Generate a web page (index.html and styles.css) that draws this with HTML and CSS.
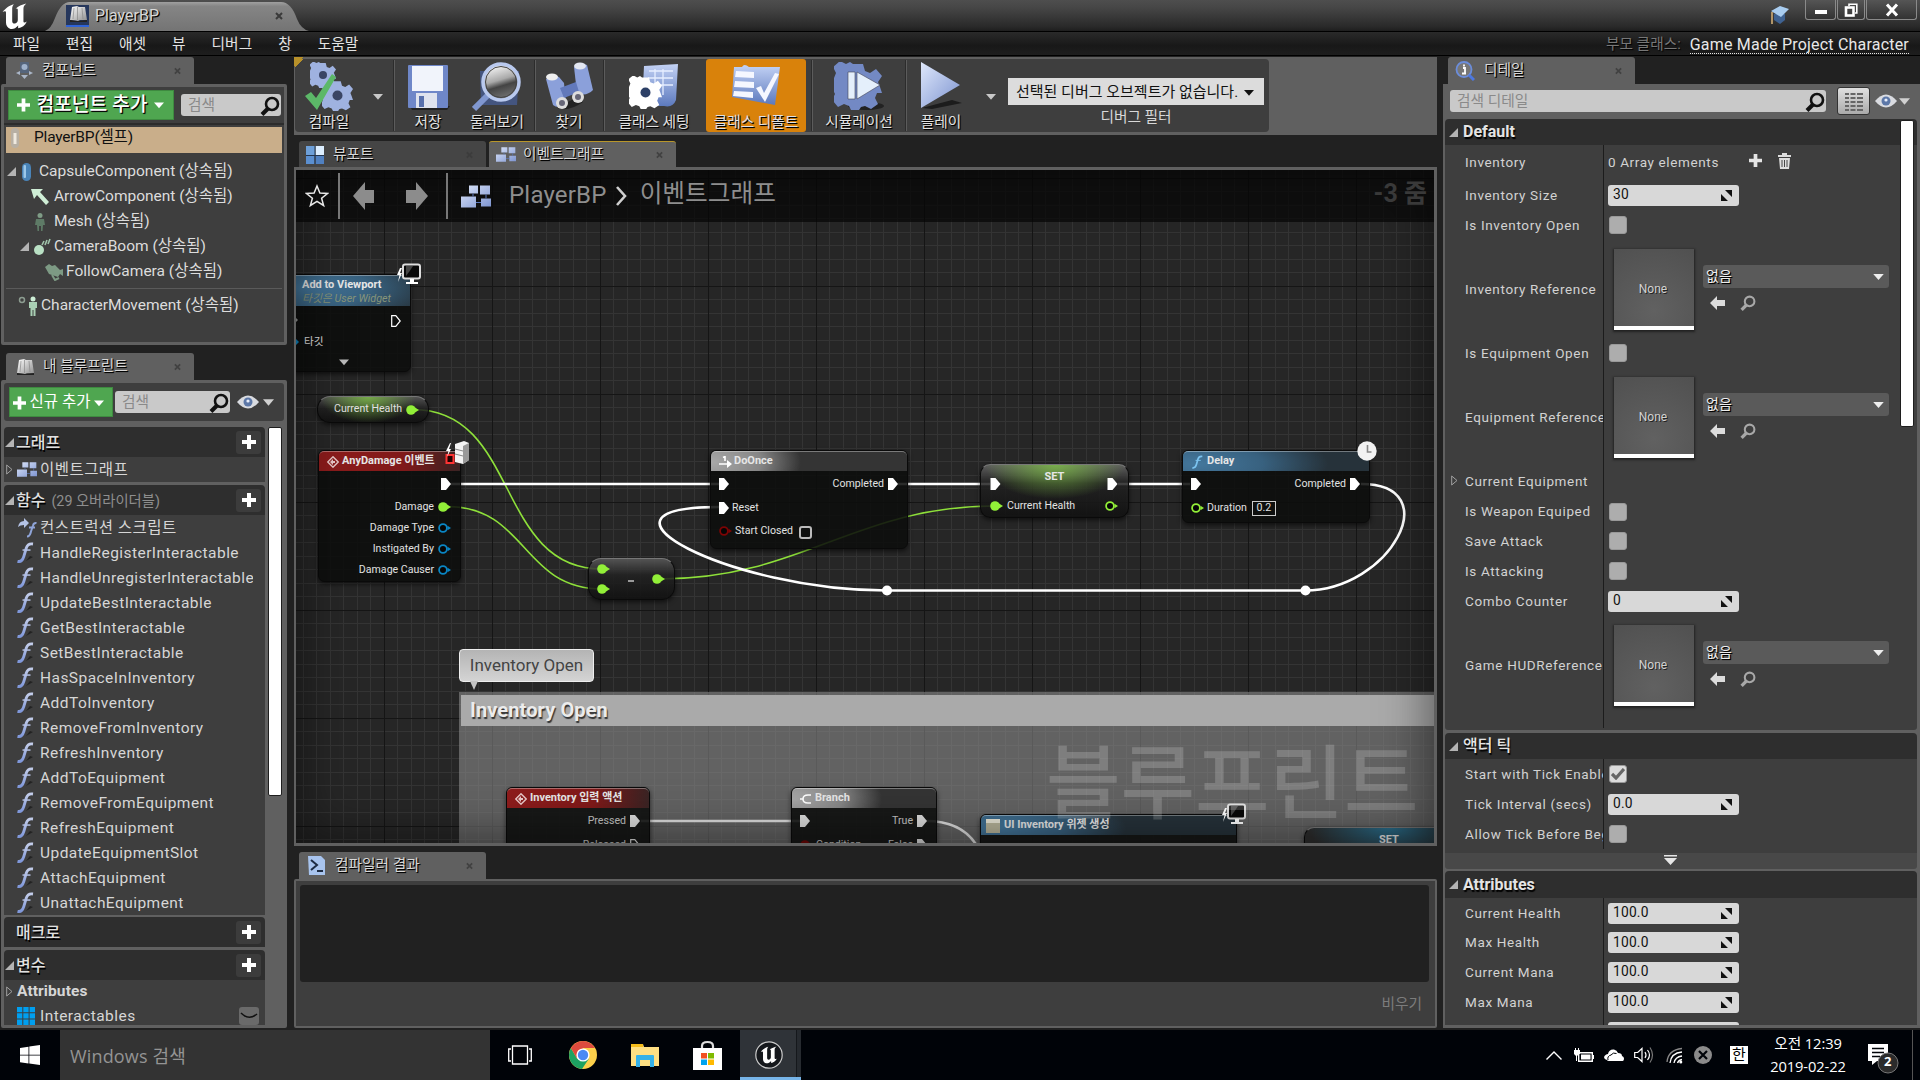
FILE: index.html
```html
<!DOCTYPE html>
<html lang="ko">
<head>
<meta charset="utf-8">
<title>PlayerBP</title>
<link rel="stylesheet" href="styles.css">
</head>
<body>
<svg class="defs" width="0" height="0">
  <defs>
    <linearGradient id="blue" x1="0" y1="0" x2="0" y2="1"><stop offset="0" stop-color="#c3d2f5"/><stop offset="1" stop-color="#5c79bd"/></linearGradient>
    <linearGradient id="blue2" x1="0" y1="0" x2="1" y2="1"><stop offset="0" stop-color="#dfe8fb"/><stop offset="1" stop-color="#7c93d0"/></linearGradient>
    <linearGradient id="fgrad" x1="0" y1="0" x2="0" y2="1"><stop offset="0" stop-color="#c3cdea"/><stop offset="1" stop-color="#7f97da"/></linearGradient>
    <linearGradient id="silver" x1="0" y1="0" x2="1" y2="1"><stop offset="0" stop-color="#ffffff"/><stop offset="1" stop-color="#8f8f8f"/></linearGradient>
    <linearGradient id="lens" x1=".3" y1="0" x2=".6" y2="1"><stop offset="0" stop-color="#fff"/><stop offset=".45" stop-color="#a9a9a9"/><stop offset=".62" stop-color="#444"/><stop offset="1" stop-color="#777"/></linearGradient>
    <linearGradient id="tabfill" x1="0" y1="0" x2="0" y2="1"><stop offset="0" stop-color="#a0a0a0"/><stop offset=".15" stop-color="#858585"/><stop offset="1" stop-color="#747474"/></linearGradient>
    <pattern id="minor" x="384" y="286" width="27" height="27" patternUnits="userSpaceOnUse"><path d="M0 0h27v1H0zM0 13h27v1H0zM0 0h1v27H0zM13 0h1v27h-1z" fill="#343434"/></pattern>
    <pattern id="major" x="384" y="286" width="108" height="108" patternUnits="userSpaceOnUse"><path d="M0 0h108v1H0zM0 0h1v108H0z" fill="#151515"/></pattern>
    <symbol id="i-ue" viewBox="0 0 24 24"><path d="M1 8C3 5 7 2 11 1C10 2 9.500 3.500 9.500 5V16C9.500 18 11 18.500 12 18.200C13.500 17.500 14.500 16.500 14.500 15V6C14.500 5 13.500 4.500 12.500 5C15 3 18 1.500 22 .5C20.500 2 19.500 3 19.500 5V16C19.500 17.500 20.500 18 22.500 16.500C21 20 18 22 14.800 22.500V20C12.500 22.500 10.500 23.500 8 23C5.500 22 4 20 4 17.500V8.500C4 7 2.500 7 1 8Z" fill="#fff"/></symbol>
    <symbol id="i-x" viewBox="0 0 8 8"><path d="M1 1l6 6M7 1l-6 6" stroke="#3a3a3a" stroke-width="2"/></symbol>
    <symbol id="i-book" viewBox="0 0 20 18"><path d="M4 2l5-1 2 1 6 0 2 13-7 0-2 1-8-1z" fill="url(#silver)"/><path d="M2 15l8 1 9-1v2H2z" fill="#222"/><path d="M9.500 2v13M6 3L5 14M14 3l1 11" stroke="#888" stroke-width=".7"/></symbol>
    <symbol id="i-mag" viewBox="0 0 20 20"><circle cx="12" cy="8" r="6" fill="none" stroke="currentColor" stroke-width="2.600"/><path d="M8 12.500L2 18.500" stroke="currentColor" stroke-width="4"/></symbol>
    <symbol id="i-down" viewBox="0 0 12 8"><path d="M0 1h12L6 8z" fill="currentColor"/></symbol>
    <symbol id="i-plus" viewBox="0 0 14 14"><path d="M5 0h4v5h5v4H9v5H5V9H0V5h5z" fill="currentColor"/></symbol>
    <symbol id="i-open" viewBox="0 0 9 9"><path d="M9 0v9H0z" fill="#b4b4b4"/></symbol>
    <symbol id="i-shut" viewBox="0 0 7 11"><path d="M.7 1v9L6 5.500z" fill="none" stroke="#a0a0a0"/></symbol>
    <symbol id="i-eye" viewBox="0 0 22 14"><path d="M0 7Q11-6 22 7Q11 20 0 7z" fill="#d9dbe0"/><circle cx="11" cy="7" r="4.500" fill="#5d78a8"/><circle cx="11" cy="6" r="1.600" fill="#e8eefc"/></symbol>
    <symbol id="i-graph" viewBox="0 0 30 24"><path d="M8 1h9v8H8zM19 1h10v9H19zM0 12h15v11H0zM20 14h10v8H20z" fill="url(#blue2)"/><path d="M12 9v3M25 10v4M15 18h5" stroke="#5c79bd"/></symbol>
    <symbol id="i-view" viewBox="0 0 18 18"><path d="M0 0h9v9H0z" fill="#6d9fd8"/><path d="M9.500 0H18v9H9.500z" fill="#dceeff"/><path d="M0 10h8.500v8H0z" fill="#5b8fd0"/><path d="M9.500 10H18v8H9.500z" fill="#5080c0"/><path d="M9 0v18M0 9.500h18" stroke="#23344d"/></symbol>
    <symbol id="i-f" viewBox="0 0 17 21"><path d="M.5 19.300Q5 20.500 6.800 14.500L9.300 6Q10.800 1.200 16 2" fill="none" stroke="currentColor" stroke-width="2.600"/><path d="M5.500 8h8" stroke="currentColor" stroke-width="1.500"/></symbol>
    <symbol id="i-fl" viewBox="0 0 17 21"><path d="M9 19l7-4-3-1z" fill="#222"/><path d="M.5 19.300Q5 20.500 6.800 14.500L9.300 6Q10.800 1.200 16 2" fill="none" stroke="url(#fgrad)" stroke-width="2.800"/><path d="M5.500 7.300h8v1.500h-8z" fill="#b4c0e4"/></symbol>
    <symbol id="i-spin" viewBox="0 0 11 11"><path d="M4 0h7v7zM0 4v7h7z" fill="#111"/></symbol>
    <symbol id="i-back" viewBox="0 0 15 14"><path d="M0 7l7-7v4h8v6H7v4z" fill="currentColor"/></symbol>
    <symbol id="p-exec" viewBox="0 0 10 12"><path d="M0 0h5l5 6-5 6H0z" fill="#fff"/></symbol>
    <symbol id="p-exec0" viewBox="0 0 10 12"><path d="M.7.7h4.100L9.200 6l-4.400 5.300H.7z" fill="none" stroke="#fff" stroke-width="1.200"/></symbol>
    <symbol id="p-full" viewBox="0 0 13 10"><circle cx="5" cy="5" r="4.800" fill="currentColor"/><path d="M9 2.500l4 2.500-4 2.500z" fill="currentColor"/></symbol>
    <symbol id="p-ring" viewBox="0 0 13 10"><circle cx="5" cy="5" r="3.900" fill="#050505" stroke="currentColor" stroke-width="1.800"/><path d="M9.500 2.800L13 5 9.500 7.200z" fill="currentColor"/></symbol>
    <symbol id="i-mon" viewBox="0 0 26 22"><path d="M4 5L1 12h2.500L2 19l4-9H4l2-5z" fill="#fff"/><rect x="7" y="1.500" width="17" height="14" rx="2" fill="#080808" stroke="#ddd" stroke-width="2"/><path d="M14 16h4v3h4v2H10v-2h4z" fill="#fff"/><path d="M10 13Q14 8 17 3h-7z" fill="#444"/></symbol>
    <symbol id="i-event" viewBox="0 0 12 12"><path d="M6 .8L11.200 6 6 11.200.8 6z" fill="none" stroke="#e9c9c9" stroke-width="1.400"/><path d="M3 6l3-3v2h2v2H6v2z" fill="#e9c9c9"/></symbol>
    <symbol id="i-gear" viewBox="-12 -12 24 24"><path d="M-2.500-11h5l1 3.500 2.500 1 3-2 3 3.500-2 3 1 2.500 1 3-2.500 0-1 2.500 1.500 3-3.500 2.500-3-1.500-2 .5-1 1.500h-4l-1-2-2.500-1-3 1.500-3-3.500 1.500-3-1-2-2.500-1v-4l3-1 1-2.500-1.500-3 3.500-3 3 1.500 2-1z" fill="currentColor"/></symbol>
  </defs>
</svg>

<div class="app">
  <header class="titlebar">
    <svg class="ue" width="30" height="27"><use href="#i-ue"/></svg>
    <div class="doctab">
      <svg class="doctab-shape" width="264" height="30" viewBox="0 0 264 30"><path d="M0 30Q6 28 10 17Q16 1 25 1H236Q246 1 252 18Q256 28 264 30z" fill="url(#tabfill)"/></svg>
      <div class="doctab-row">
        <span class="docicon"><svg width="20" height="18"><use href="#i-book"/></svg></span>
        <span class="sh">PlayerBP</span>
        <svg class="tx" width="8" height="8"><use href="#i-x"/></svg>
      </div>
    </div>
    <svg class="hat" width="20" height="20" viewBox="0 0 20 20"><path d="M4 9v6l6 4 5-4V9z" fill="#3f6291"/><path d="M1 6l9-5 9 3-8 8z" fill="#a9cdf0"/><path d="M2 7v12" stroke="#b09468" stroke-width="2"/></svg>
    <div class="winbtns">
      <span class="w1"><svg width="14" height="14" viewBox="0 0 14 14"><path d="M1 7h12v4H1z" fill="#fff"/></svg></span>
      <span class="w2"><svg width="14" height="14" viewBox="0 0 14 14"><path d="M5 3V1.200h7.800V10H11" fill="none" stroke="#fff" stroke-width="1.600"/><rect x="2" y="4.500" width="7.500" height="8" fill="none" stroke="#fff" stroke-width="2.600"/></svg></span>
      <span class="w3"><svg width="14" height="14" viewBox="0 0 14 14"><path d="M2 1.500l10 11M12 1.500l-10 11" stroke="#fff" stroke-width="3"/></svg></span>
    </div>
  </header>
  <nav class="menubar">
    <span>파일</span><span>편집</span><span>애셋</span><span>뷰</span><span>디버그</span><span>창</span><span>도움말</span>
    <div class="parent"><span class="pl">부모 클래스:</span><span class="link">Game Made Project Character</span></div>
  </nav>

  <main class="work">
    <aside class="left">
      <div class="tab">
        <svg width="19" height="20" viewBox="0 0 19 20"><rect x="5" y="1" width="9" height="11" rx="1" fill="#55657c"/><circle cx="9.500" cy="6" r="3" fill="#9fb2cc"/><path d="M1 12l4-2v4zM18 12l-4-2v4zM6 14h7l-3.500 4z" fill="#aab6c8"/></svg>
        <span class="sh">컴포넌트</span><svg class="tx" width="7" height="8"><use href="#i-x"/></svg>
      </div>
      <section class="panel comp">
        <div class="bar">
          <div class="green big"><svg width="13" height="14"><use href="#i-plus"/></svg><span class="sh">컴포넌트 추가</span><svg width="10" height="8"><use href="#i-down"/></svg></div>
          <div class="search s1"><span>검색</span><svg width="20" height="20"><use href="#i-mag"/></svg></div>
        </div>
        <div class="tree">
          <div class="row sel"><svg width="10" height="20" viewBox="0 0 10 20"><rect x="1" y="0" width="8" height="20" rx="4" fill="#b8b0a4"/><path d="M3.500 5h3v11h-3z" fill="#efe9df"/></svg><span>PlayerBP(셀프)</span></div>
          <div class="row d0"><svg width="9" height="9"><use href="#i-open"/></svg><svg class="cap" width="12" height="18" viewBox="0 0 12 18"><rect x="1" y="0" width="9" height="18" rx="4.500" fill="#4a84b8"/><rect x="2.500" y="2" width="2.500" height="13" rx="1" fill="#9cc8ea"/></svg><span>CapsuleComponent (상속됨)</span></div>
          <div class="row d1"><svg width="20" height="18" viewBox="0 0 20 18"><path d="M0 1h12L9 4l9 10-3 3L6 7l-3 4z" fill="#cfeed6"/></svg><span>ArrowComponent (상속됨)</span></div>
          <div class="row d1"><svg width="20" height="18" viewBox="0 0 20 18"><circle cx="9" cy="2.500" r="2.500" fill="#7f9c86"/><path d="M5 6h8l1 6h-2l-.5 6H10v-5H8v5H6.500L6 12H4z" fill="#5e7a66"/></svg><span>Mesh (상속됨)</span></div>
          <div class="row d2"><svg width="9" height="9"><use href="#i-open"/></svg><svg class="boom" width="19" height="18" viewBox="0 0 19 18"><circle cx="7" cy="12" r="5" fill="#b9e0c4"/><path d="M10 7l2-4M13 7l2-5M16 6l2-5" stroke="#9fc4aa" stroke-width="1.600"/></svg><span>CameraBoom (상속됨)</span></div>
          <div class="row d3"><svg width="20" height="18" viewBox="0 0 20 18"><path d="M1 4l4-3 3 2 3-1 5 5 3-1v7l-3-2-2 3-9-3z" fill="#7d9a84"/><path d="M8 12l3 5 4-2" fill="none" stroke="#7d9a84" stroke-width="2"/></svg><span>FollowCamera (상속됨)</span></div>
          <div class="row d4"><svg width="21" height="20" viewBox="0 0 21 20"><circle cx="4" cy="4" r="2.500" fill="none" stroke="#8c9c90" stroke-width="1.500"/><circle cx="15" cy="3" r="2.500" fill="#cdeed6"/><path d="M11 6h8v6h-1.500v8h-2v-6h-1v6h-2v-8H11z" fill="#a9d0b4"/></svg><span>CharacterMovement (상속됨)</span></div>
        </div>
      </section>

      <div class="tab t2"><svg width="20" height="18"><use href="#i-book"/></svg><span class="sh">내 블루프린트</span><svg class="tx" width="7" height="8"><use href="#i-x"/></svg></div>
      <section class="panel bp">
        <div class="bar">
          <div class="green"><svg width="13" height="14"><use href="#i-plus"/></svg><span>신규 추가</span><svg width="10" height="8"><use href="#i-down"/></svg></div>
          <div class="search s2"><span>검색</span><svg width="20" height="20"><use href="#i-mag"/></svg></div>
          <svg class="eye" width="22" height="14"><use href="#i-eye"/></svg><svg class="wt" width="11" height="8"><use href="#i-down"/></svg>
        </div>
        <div class="listwrap">
          <div class="list">
            <div class="hd"><svg width="9" height="9"><use href="#i-open"/></svg><b>그래프</b><i class="add"><svg width="14" height="14"><use href="#i-plus"/></svg></i></div>
            <div class="body gr"><div class="fn"><svg class="sh0" width="7" height="11"><use href="#i-shut"/></svg><svg width="20" height="17"><use href="#i-graph"/></svg><span>이벤트그래프</span></div></div>
            <div class="hd"><svg width="9" height="9"><use href="#i-open"/></svg><b>함수</b><em>(29 오버라이더블)</em><i class="add"><svg width="14" height="14"><use href="#i-plus"/></svg></i></div>
            <div class="body fns">
              <div class="fn"><svg class="fi" width="20" height="20" viewBox="0 0 20 20"><path d="M1 9Q2 3 7 3V0l5 5-5 5V7Q3 7 1 9z" fill="#b4c2e4"/><path d="M10 18.500q3 0 4-5l2-6q.8-3 3.500-2.500M12 9.500h6" fill="none" stroke="#8fa4d8" stroke-width="2"/></svg><span>컨스트럭션 스크립트</span></div>
              <div class="fn"><svg class="fi" width="17" height="21"><use href="#i-fl"/></svg><span>HandleRegisterInteractable</span></div>
              <div class="fn"><svg class="fi" width="17" height="21"><use href="#i-fl"/></svg><span>HandleUnregisterInteractable</span></div>
              <div class="fn"><svg class="fi" width="17" height="21"><use href="#i-fl"/></svg><span>UpdateBestInteractable</span></div>
              <div class="fn"><svg class="fi" width="17" height="21"><use href="#i-fl"/></svg><span>GetBestInteractable</span></div>
              <div class="fn"><svg class="fi" width="17" height="21"><use href="#i-fl"/></svg><span>SetBestInteractable</span></div>
              <div class="fn"><svg class="fi" width="17" height="21"><use href="#i-fl"/></svg><span>HasSpaceInInventory</span></div>
              <div class="fn"><svg class="fi" width="17" height="21"><use href="#i-fl"/></svg><span>AddToInventory</span></div>
              <div class="fn"><svg class="fi" width="17" height="21"><use href="#i-fl"/></svg><span>RemoveFromInventory</span></div>
              <div class="fn"><svg class="fi" width="17" height="21"><use href="#i-fl"/></svg><span>RefreshInventory</span></div>
              <div class="fn"><svg class="fi" width="17" height="21"><use href="#i-fl"/></svg><span>AddToEquipment</span></div>
              <div class="fn"><svg class="fi" width="17" height="21"><use href="#i-fl"/></svg><span>RemoveFromEquipment</span></div>
              <div class="fn"><svg class="fi" width="17" height="21"><use href="#i-fl"/></svg><span>RefreshEquipment</span></div>
              <div class="fn"><svg class="fi" width="17" height="21"><use href="#i-fl"/></svg><span>UpdateEquipmentSlot</span></div>
              <div class="fn"><svg class="fi" width="17" height="21"><use href="#i-fl"/></svg><span>AttachEquipment</span></div>
              <div class="fn"><svg class="fi" width="17" height="21"><use href="#i-fl"/></svg><span>UnattachEquipment</span></div>
            </div>
            <div class="hd m"><b class="ind">매크로</b><i class="add"><svg width="14" height="14"><use href="#i-plus"/></svg></i></div>
            <div class="hd"><svg width="9" height="9"><use href="#i-open"/></svg><b>변수</b><i class="add"><svg width="14" height="14"><use href="#i-plus"/></svg></i></div>
            <div class="body vars">
              <div class="fn at"><svg class="sh0" width="7" height="11"><use href="#i-shut"/></svg><b>Attributes</b></div>
              <div class="fn"><svg class="fi" width="18" height="18" viewBox="0 0 18 18"><path d="M0 0h5.300v5.300H0zM6.300 0h5.300v5.300H6.300zM12.600 0H18v5.300h-5.400zM0 6.300h5.300v5.300H0zM6.300 6.300h5.300v5.300H6.300zM12.600 6.300H18v5.300h-5.400zM0 12.600h5.300V18H0zM6.300 12.600h5.300V18H6.300zM12.600 12.600H18V18h-5.400z" fill="#009ff0"/></svg><span>Interactables</span><i class="lid"><svg width="18" height="8" viewBox="0 0 18 8"><path d="M1 1q8 8 16 1" fill="none" stroke="#111" stroke-width="1.600"/></svg></i></div>
            </div>
          </div>
          <div class="thumb"></div>
        </div>
      </section>
    </aside>

    <section class="center">
      <div class="toolbar">
        <div class="tools">
          <div class="tool tl-a"><svg width="48" height="50" viewBox="0 0 48 50"><g color="#9fb2e0"><svg x="5" y="0" width="26" height="26"><use href="#i-gear"/></svg><svg x="17" y="18" width="31" height="31"><use href="#i-gear"/></svg></g><circle cx="18" cy="13" r="4" fill="#3a4564"/><circle cx="32.500" cy="33.500" r="5" fill="#3a4564"/><path d="M0 34l6-4 5 6L27 12l4 3L12 48z" fill="#5cb868"/></svg><span class="sh">컴파일</span></div>
          <svg class="ta" width="10" height="7"><use href="#i-down"/></svg><i class="sep s-a"></i>
          <div class="tool tl-b"><svg width="48" height="50" viewBox="0 0 48 50"><path d="M6 44h40l-3 4H8z" fill="#222"/><rect x="4" y="3" width="40" height="43" rx="1" fill="#6f87c8"/><rect x="8" y="4" width="31" height="25" fill="#f1f4fb"/><rect x="12" y="31" width="21" height="15" fill="#dfe3ee"/><rect x="15" y="34" width="5" height="11" fill="#5870ac"/></svg><span class="sh">저장</span></div>
          <div class="tool tl-c"><svg width="50" height="50" viewBox="0 0 50 50"><path d="M8 9h39l-2 34H9z" fill="#44557f"/><path d="M2 47l14-14" stroke="#8097d0" stroke-width="6"/><circle cx="29" cy="20" r="18" fill="url(#lens)" stroke="#b9c9ee" stroke-width="3.500"/><circle cx="29" cy="20" r="15.500" fill="none" stroke="#444"/></svg><span class="sh">둘러보기</span></div>
          <i class="sep s-b"></i>
          <div class="tool tl-d"><svg width="48" height="50" viewBox="0 0 48 50"><path d="M12 46q12 4 26-6l-4-6z" fill="#222"/><path d="M1 17q6-5 13-2l5 6 2 20q-7 7-13 2z" fill="#8ba0da"/><path d="M29 5q6-5 13-2l6 25q-7 7-16 3z" fill="#8ba0da"/><path d="M15 26l16-6 3 10-15 6z" fill="#6279bb"/><ellipse cx="7" cy="15" rx="6" ry="3.500" fill="#efefef"/><ellipse cx="35" cy="4" rx="6" ry="3.500" fill="#e3e7f2"/><circle cx="17" cy="41" r="6" fill="#ddd"/><circle cx="33" cy="35" r="6" fill="#ddd"/><circle cx="17" cy="41" r="3" fill="#667"/><circle cx="33" cy="35" r="3" fill="#667"/></svg><span class="sh">찾기</span></div>
          <i class="sep s-c"></i>
          <div class="tool tl-e"><svg width="50" height="50" viewBox="0 0 50 50"><path d="M15 4l34-2-2 36q-3 8-12 6l-22 0z" fill="url(#blue)"/><path d="M20 9h24M19 16h25M19 23h25M26 7v26M34 7v26" stroke="#e6eeff" stroke-width="1.300"/><svg x="0" y="14" width="33" height="33" color="#fff"><use href="#i-gear"/></svg><circle cx="16.500" cy="30.500" r="5" fill="#2c3f66"/></svg><span class="sh">클래스 세팅</span></div>
          <div class="tool tl-f on"><svg width="50" height="50" viewBox="0 0 50 50"><path d="M3 5h8q2-4 7 0h31l-5 38L1 35z" fill="url(#blue)"/><path d="M5 9l18 1v6L4 15zM4 19l19 1v6L3 25zM3 29l19 1v6L2 34z" fill="#f5f7ff"/><path d="M25 26l5-2 3 7 11-20 4 1-14 28z" fill="#f5f7ff"/></svg><span class="sh">클래스 디폴트</span></div>
          <i class="sep s-d"></i>
          <div class="tool tl-g"><svg width="50" height="50" viewBox="0 0 50 50"><ellipse cx="32" cy="44" rx="18" ry="4" fill="#222"/><svg x="0" y="0" width="48" height="48" color="#7389c4"><use href="#i-gear"/></svg><path d="M14 10h7v27h-7zM23 10l23 13-23 14z" fill="#e4effb" stroke="#445" stroke-width=".6"/></svg><span class="sh">시뮬레이션</span></div>
          <i class="sep s-e"></i>
          <div class="tool tl-h"><svg width="42" height="50" viewBox="0 0 42 50"><path d="M2 46l30-8 10 3-30 6z" fill="#1c1c1c"/><path d="M1 0l39 23L1 46z" fill="url(#blue2)"/></svg><span class="sh">플레이</span></div>
          <svg class="ta tb" width="10" height="7"><use href="#i-down"/></svg>
          <div class="dbg"><div class="combo"><span>선택된 디버그 오브젝트가 없습니다.</span><svg width="10" height="7"><use href="#i-down"/></svg></div><span class="lbl">디버그 필터</span></div>
        </div>
      </div>
      <div class="tabs">
        <div class="tab off"><svg width="18" height="18"><use href="#i-view"/></svg><span class="sh">뷰포트</span><svg class="tx" width="7" height="8"><use href="#i-x"/></svg></div>
        <div class="tab act"><svg width="20" height="17"><use href="#i-graph"/></svg><span class="sh">이벤트그래프</span><svg class="tx" width="7" height="8"><use href="#i-x"/></svg></div>
      </div>
      <div class="graph">
        <div class="world">
          <svg class="layer" width="1434" height="843" viewBox="0 0 1434 843">
            <rect x="296" y="170" width="1138" height="673" fill="url(#minor)"/>
            <rect x="296" y="170" width="1138" height="673" fill="url(#major)"/>
            <rect x="459" y="692" width="975" height="151" fill="#9a9a9a" fill-opacity=".52"/>
            <rect x="461" y="695" width="973" height="31" fill="#aaa"/>
            <g fill="none" stroke="#8ee03a" stroke-width="1.600">
              <path d="M413 409.500C520 409.500 495 569 602 569"/>
              <path d="M447 506.500C527 506.500 522 589 602 589"/>
              <path d="M661 579C801 579 855 506 995 506"/>
            </g>
            <g fill="none" stroke="#fff" stroke-width="2.600">
              <path d="M451 484H719M898 484H990M1118 484H1190"/>
              <path d="M887 590.500C730 590.500 570 507 719 507"/>
              <path d="M887 590.500H1305"/>
              <path d="M1361 484C1448 484 1390 590.500 1305 590.500"/>
              <path d="M641 821H800" stroke="#ddd"/>
              <path d="M926 821Q962 821 977 846" stroke="#ddd"/>
            </g>
            <g fill="#fff"><circle cx="887" cy="590.500" r="5"/><circle cx="1305.500" cy="590.500" r="5"/></g>
          </svg>

          <div class="node n-view"><div class="nh blue two"><b>Add to Viewport</b><em>타깃은 User Widget</em></div>
            <div class="nb"><div class="pr ex0"><svg class="r" width="10" height="12"><use href="#p-exec0"/></svg></div><div class="pr tg">타깃</div><svg class="more" width="10" height="8"><use href="#i-down"/></svg></div></div>
          <svg class="badge b6" width="3" height="30" viewBox="0 0 3 30"><path d="M0 3l2 2-2 2z" fill="#999"/><path d="M0 24l3 3-3 3z" fill="#0a86c4"/></svg>
          <svg class="badge b1" width="26" height="22"><use href="#i-mon"/></svg>

          <div class="node pill n-ch"><span>Current Health</span><svg class="pg" width="13" height="10"><use href="#p-full"/></svg></div>

          <div class="node n-any"><div class="nh red"><svg width="12" height="12"><use href="#i-event"/></svg><b>AnyDamage 이벤트</b></div>
            <div class="nb"><div class="pr"><svg class="r" width="10" height="12"><use href="#p-exec"/></svg></div>
              <div class="pr p"><span class="r">Damage</span><svg class="pg" width="13" height="10"><use href="#p-full"/></svg></div>
              <div class="pr p"><span class="r">Damage Type</span><svg class="po" width="13" height="10"><use href="#p-ring"/></svg></div>
              <div class="pr p"><span class="r">Instigated By</span><svg class="po" width="13" height="10"><use href="#p-ring"/></svg></div>
              <div class="pr p"><span class="r">Damage Causer</span><svg class="po" width="13" height="10"><use href="#p-ring"/></svg></div></div></div>
          <svg class="badge b2" width="28" height="26" viewBox="0 0 28 26"><rect x="1.500" y="15" width="7" height="8" fill="#200" stroke="#f33" stroke-width="2"/><path d="M5 3L1 11h2.500L2 17l4-8H4l2-6z" fill="#fff"/><path d="M10 4l9-3 5 2v17l-6 4-8-2z" fill="#f4f4f4"/><path d="M18 6l6-3v17l-6 4z" fill="#999"/><path d="M10 9l8 2M10 14l8 2" stroke="#888"/></svg>

          <div class="node pill n-sub"><svg class="pg i1" width="13" height="10"><use href="#p-full"/></svg><svg class="pg i2" width="13" height="10"><use href="#p-full"/></svg><i class="minus"></i><svg class="pg i3" width="13" height="10"><use href="#p-full"/></svg></div>

          <div class="node n-once"><div class="nh gray"><svg width="13" height="12" viewBox="0 0 13 12"><path d="M0 8h9M4 1.500l2-1V5" fill="none" stroke="#fff" stroke-width="1.600"/><path d="M8 4l5 4-5 4z" fill="#fff"/></svg><b>DoOnce</b></div>
            <div class="nb"><div class="pr"><svg width="10" height="12"><use href="#p-exec"/></svg><span class="r">Completed</span><svg width="10" height="12"><use href="#p-exec"/></svg></div>
              <div class="pr q"><svg width="10" height="12"><use href="#p-exec"/></svg><span>Reset</span></div>
              <div class="pr q"><svg class="pk" width="13" height="10"><use href="#p-ring"/></svg><span>Start Closed</span><i class="cb"></i></div></div></div>

          <div class="node pill n-set"><b>SET</b><div class="pr"><svg width="11" height="12"><use href="#p-exec"/></svg><svg class="r" width="11" height="12"><use href="#p-exec"/></svg></div>
            <div class="pr s"><svg class="pg" width="13" height="10"><use href="#p-full"/></svg><span>Current Health</span><svg class="pg r" width="13" height="10"><use href="#p-ring"/></svg></div></div>

          <div class="node n-delay"><div class="nh blue"><svg class="fb" width="11" height="14"><use href="#i-f"/></svg><b>Delay</b></div>
            <div class="nb"><div class="pr"><svg width="10" height="12"><use href="#p-exec"/></svg><span class="r">Completed</span><svg width="10" height="12"><use href="#p-exec"/></svg></div>
              <div class="pr q"><svg class="pg" width="13" height="10"><use href="#p-ring"/></svg><span>Duration</span><i class="num">0.2</i></div></div></div>
          <svg class="badge b3" width="20" height="20" viewBox="0 0 20 20"><circle cx="10" cy="10" r="9.700" fill="#f2f2f2"/><path d="M10.500 4v7h4" fill="none" stroke="#888" stroke-width="1.600"/></svg>

          <div class="bubble">Inventory Open</div><svg class="badge b5" width="8" height="9"><path d="M0 0h8L4 9z" fill="#c4c4c4"/></svg>
          <div class="ctitle">Inventory Open</div>

          <div class="node n-inv"><div class="nh red"><svg width="12" height="12"><use href="#i-event"/></svg><b>Inventory 입력 액션</b></div>
            <div class="nb"><div class="pr"><span class="r">Pressed</span><svg width="10" height="12"><use href="#p-exec"/></svg></div><div class="pr q"><span class="r">Released</span><svg width="10" height="12"><use href="#p-exec0"/></svg></div></div></div>
          <div class="node n-br"><div class="nh gray"><svg width="13" height="12" viewBox="0 0 13 12"><path d="M11 2H8Q3 2 3 6t5 4h3M0 6h3" fill="none" stroke="#fff" stroke-width="1.600"/></svg><b>Branch</b></div>
            <div class="nb"><div class="pr"><svg width="10" height="12"><use href="#p-exec"/></svg><span class="r">True</span><svg width="10" height="12"><use href="#p-exec"/></svg></div><div class="pr q"><svg class="pk" width="13" height="10"><use href="#p-full"/></svg><span>Condition</span><span class="r">False</span><svg width="10" height="12"><use href="#p-exec"/></svg></div></div></div>
          <div class="node n-ui"><div class="nh blue"><svg width="14" height="14" viewBox="0 0 14 14"><path d="M0 0h14v14H0z" fill="#b7b49a"/><path d="M0 0h14v4H0z" fill="#e8e6d6"/></svg><b>UI Inventory 위젯 생성</b></div></div>
          <svg class="badge b4" width="26" height="22"><use href="#i-mon"/></svg>
          <div class="node pill n-set2"><b>SET</b></div>
          <div class="mark">블루프린트</div>
        </div>
        <div class="vig"></div>
        <div class="ghead">
          <svg width="24" height="24" viewBox="0 0 24 24"><path d="M12 2l2.900 7 7.600.5-5.900 4.700 2 7.300L12 17.300 5.400 21.500l2-7.300L1.500 9.500 9.100 9z" fill="none" stroke="#e8e8e8" stroke-width="1.500"/></svg>
          <i class="vl v1"></i><svg class="bk" width="21" height="28" viewBox="0 0 21 28"><path d="M0 14L12 0v8h9v13h-9v7z" fill="#8c8c8c"/></svg>
          <svg class="fw" width="22" height="28" viewBox="0 0 22 28"><path d="M22 14L10 0v8H0v13h10v7z" fill="#8c8c8c"/></svg><i class="vl v2"></i>
          <svg class="gi" width="30" height="25"><use href="#i-graph"/></svg>
          <span class="c1">PlayerBP</span><svg class="chev" width="13" height="20" viewBox="0 0 13 20"><path d="M2 1l8 9-8 9" fill="none" stroke="#cfcfcf" stroke-width="2.600"/></svg><span class="c2">이벤트그래프</span>
          <span class="zoom">-3 줌</span>
        </div>
      </div>
      <div class="tab t3"><svg width="17" height="19" viewBox="0 0 17 19"><path d="M0 0h13l4 4v15H1z" fill="#a8c4ee"/><path d="M3 4l6 5-6 5M9 15h6" fill="none" stroke="#1d2c44" stroke-width="2"/></svg><span class="sh">컴파일러 결과</span><svg class="tx" width="7" height="8"><use href="#i-x"/></svg></div>
      <div class="panel out"><div class="log"></div><div class="clr">비우기</div></div>
    </section>

    <aside class="right">
      <div class="tab"><svg width="20" height="20" viewBox="0 0 20 20"><circle cx="9" cy="8.500" r="7.500" fill="#777" stroke="#6b8ddb" stroke-width="1.800"/><path d="M14 14l5 5" stroke="#4d78e0" stroke-width="3"/><path d="M8 7h2v5M9 3.500v2M7 12.500h4" stroke="#fff" stroke-width="1.800" fill="none"/></svg><span class="sh">디테일</span><svg class="tx" width="7" height="8"><use href="#i-x"/></svg></div>
      <section class="det">
        <div class="dbar"><div class="search s3"><span>검색 디테일</span><svg width="20" height="20"><use href="#i-mag"/></svg></div>
          <span class="gbtn"><svg width="18" height="19" viewBox="0 0 18 19"><path d="M0 1h4v2H0zM5.500 1h5v2h-5zM12 1h6v2h-6zM0 5h4v2H0zM5.500 5h5v2h-5zM12 5h6v2h-6zM0 9h4v2H0zM5.500 9h5v2h-5zM12 9h6v2h-6zM0 13h4v2H0zM5.500 13h5v2h-5zM12 13h6v2h-6zM0 17h4v2H0zM5.500 17h5v2h-5zM12 17h6v2h-6z" fill="#666"/></svg></span>
          <svg class="eye" width="22" height="14"><use href="#i-eye"/></svg><svg class="wt" width="11" height="8"><use href="#i-down"/></svg></div>
        <div class="dbody">
          <div class="dh"><svg width="9" height="9"><use href="#i-open"/></svg><b>Default</b></div>
          <div class="props p1">
            <div class="prop h35"><label>Inventory</label><div class="v"><span class="arr">0 Array elements</span><svg class="pl1" width="13" height="13"><use href="#i-plus"/></svg><svg class="trash" width="13" height="16" viewBox="0 0 13 16"><path d="M0 2h4V0h5v2h4v2H0zM1 5h11l-1 11H2z" fill="#ddd"/><path d="M4 7v7M6.500 7v7M9 7v7" stroke="#444"/></svg></div></div>
            <div class="prop"><label>Inventory Size</label><div class="v"><span class="in">30<svg width="11" height="11"><use href="#i-spin"/></svg></span></div></div>
            <div class="prop"><label>Is Inventory Open</label><div class="v"><i class="ck"></i></div></div>
            <div class="prop ref"><label>Inventory Reference</label><div class="v"><span class="th">None</span><div class="rc"><span class="sel2"><em class="sh">없음</em><svg width="11" height="7"><use href="#i-down"/></svg></span><div class="ri"><svg width="15" height="14"><use href="#i-back"/></svg><svg width="16" height="16"><use href="#i-mag"/></svg></div></div></div></div>
            <div class="prop"><label>Is Equipment Open</label><div class="v"><i class="ck"></i></div></div>
            <div class="prop ref"><label>Equipment Reference</label><div class="v"><span class="th">None</span><div class="rc"><span class="sel2"><em class="sh">없음</em><svg width="11" height="7"><use href="#i-down"/></svg></span><div class="ri"><svg width="15" height="14"><use href="#i-back"/></svg><svg width="16" height="16"><use href="#i-mag"/></svg></div></div></div></div>
            <div class="prop h31"><label><svg class="ex" width="7" height="11"><use href="#i-shut"/></svg>Current Equipment</label><div class="v"></div></div>
            <div class="prop h29"><label>Is Weapon Equiped</label><div class="v"><i class="ck"></i></div></div>
            <div class="prop"><label>Save Attack</label><div class="v"><i class="ck"></i></div></div>
            <div class="prop"><label>Is Attacking</label><div class="v"><i class="ck"></i></div></div>
            <div class="prop"><label>Combo Counter</label><div class="v"><span class="in">0<svg width="11" height="11"><use href="#i-spin"/></svg></span></div></div>
            <div class="prop ref"><label>Game HUDReference</label><div class="v"><span class="th">None</span><div class="rc"><span class="sel2"><em class="sh">없음</em><svg width="11" height="7"><use href="#i-down"/></svg></span><div class="ri"><svg width="15" height="14"><use href="#i-back"/></svg><svg width="16" height="16"><use href="#i-mag"/></svg></div></div></div></div>
            <div class="prop h14"><label></label><div class="v"></div></div>
          </div>
          <div class="dh g3"><svg width="9" height="9"><use href="#i-open"/></svg><b>액터 틱</b></div>
          <div class="props p2">
            <div class="prop"><label>Start with Tick Enabled</label><div class="v"><i class="ck yes"><svg width="14" height="12" viewBox="0 0 14 12"><path d="M1 6l4 4 8-9" fill="none" stroke="#666" stroke-width="3.200"/></svg></i></div></div>
            <div class="prop"><label>Tick Interval (secs)</label><div class="v"><span class="in">0.0<svg width="11" height="11"><use href="#i-spin"/></svg></span></div></div>
            <div class="prop"><label>Allow Tick Before Begin</label><div class="v"><i class="ck"></i></div></div>
          </div>
          <div class="moreb"><svg width="13" height="10" viewBox="0 0 13 10"><path d="M0 0h13v1.500H0zM0 3h13l-6.500 7z" fill="#e6e6e6"/></svg></div>
          <div class="dh g2"><svg width="9" height="9"><use href="#i-open"/></svg><b>Attributes</b></div>
          <div class="props p3">
            <div class="prop"><label>Current Health</label><div class="v"><span class="in">100.0<svg width="11" height="11"><use href="#i-spin"/></svg></span></div></div>
            <div class="prop h29"><label>Max Health</label><div class="v"><span class="in">100.0<svg width="11" height="11"><use href="#i-spin"/></svg></span></div></div>
            <div class="prop"><label>Current Mana</label><div class="v"><span class="in">100.0<svg width="11" height="11"><use href="#i-spin"/></svg></span></div></div>
            <div class="prop"><label>Max Mana</label><div class="v"><span class="in">100.0<svg width="11" height="11"><use href="#i-spin"/></svg></span></div></div>
            <div class="prop"><label></label><div class="v"><span class="in"></span></div></div>
          </div>
          <div class="thumb dth"></div>
        </div>
      </section>
    </aside>
  </main>
</div>

<footer class="task">
  <div class="start"><svg width="20" height="20" viewBox="0 0 20 20"><path d="M0 3l8.500-1.300v8H0zM9.300 1.500L20 0v9.700H9.300zM0 10.500h8.500v8L0 17.200zM9.300 10.500H20V20L9.300 18.600z" fill="#fff"/></svg></div>
  <div class="ws">Windows 검색</div>
  <div class="ti w60"><svg width="24" height="20" viewBox="0 0 24 20"><path d="M4.500 1h15v18h-15zM3 4H.7v12H3M21 4h2.300v12H21" fill="none" stroke="#fff" stroke-width="1.300"/></svg></div>
  <div class="ti w64"><svg width="28" height="28" viewBox="-14 -14 28 28"><circle r="14" fill="#fcd04b"/><path d="M-12.100-7A14 14 0 0 0 -1 14L6 3.500 -6 3.500z" fill="#1da261"/><path d="M-12.100-7A14 14 0 0 1 12.100-7H0L-6 3.500z" fill="#dd4b3e"/><circle r="6.600" fill="#fff"/><circle r="5.200" fill="#4a8af4"/></svg></div>
  <div class="ti w60"><svg width="28" height="24" viewBox="0 0 28 24"><path d="M0 1h12l1 3h15v19H0z" fill="#ffe083"/><path d="M0 1h12v3H0z" fill="#f6bd1b"/><path d="M5 24v-11q0-1 1-1h16q1 0 1 1v11h-4v-7H9v7z" fill="#35b1e8"/></svg></div>
  <div class="ti w64"><svg width="29" height="30" viewBox="0 0 29 30"><path d="M9 9V6q0-4 5.500-4T20 6v3" fill="none" stroke="#ddd" stroke-width="2.200"/><path d="M0 8h29v22H0z" fill="#fff"/><path d="M8 13h6v5.500H8z" fill="#f25022"/><path d="M15 13h6v5.500h-6z" fill="#7fba00"/><path d="M8 19.500h6V25H8z" fill="#00a4ef"/><path d="M15 19.500h6V25h-6z" fill="#ffb900"/></svg></div>
  <div class="ti ueb"><svg width="28" height="28" viewBox="0 0 28 28"><circle cx="14" cy="14" r="13.200" fill="#15181c" stroke="#ccc" stroke-width="1.200"/><svg x="4.500" y="5" width="19" height="18"><use href="#i-ue"/></svg></svg></div>
  <div class="tray">
    <svg width="16" height="9" viewBox="0 0 16 9"><path d="M.5 8.500L8 1l7.500 7.500" fill="none" stroke="#fff" stroke-width="1.400"/></svg>
    <svg class="t-b" width="20" height="15" viewBox="0 0 20 15"><path d="M4.700 4.700h13.600v8.600H4.700z" fill="none" stroke="#fff" stroke-width="1.400"/><path d="M7 6.500h9.500v5H7zM19 7h1v4h-1zM0 2h6v4H5L3 8v5H2V8L0 6zM1 0h1v2H1zM4 0h1v2H4z" fill="#fff"/></svg>
    <svg class="t-c" width="20" height="14" viewBox="0 0 20 14"><path d="M3 12q-4-1-2.500-4Q2 6 4 6q1-5 6-4.500 3 .5 4 3.500 4 0 4 3 3 1 1.500 4.500-.5.500-2 .500H5q-2 0-2-1z" fill="#fff"/><path d="M4 12q-1-4 3-5 2-3 5.500-1.500" fill="none" stroke="#000308"/></svg>
    <svg class="t-d" width="20" height="18" viewBox="0 0 20 18"><path d="M.7 6.500h3L8 2.500v13l-4.300-4h-3z" fill="none" stroke="#fff" stroke-width="1.200"/><path d="M11 6q2 3 0 6M13.500 4q4 5 0 10" fill="none" stroke="#fff" stroke-width="1.200"/><path d="M16 1.500q5 7.500 0 15" fill="none" stroke="#777" stroke-width="1.200"/></svg>
    <svg class="t-e" width="17" height="17" viewBox="0 0 17 17"><path d="M1 15Q2 3 16 1.500" fill="none" stroke="#888" stroke-width="1.300"/><path d="M4 16Q5 6 16 5M8 16q1-6 8-7M11.500 16q1-3 4.500-3.500" fill="none" stroke="#fff" stroke-width="1.300"/><circle cx="14.800" cy="15" r="1.500" fill="#fff"/></svg>
    <svg class="t-f" width="18" height="18" viewBox="0 0 18 18"><circle cx="9" cy="9" r="9" fill="#8b8b8b"/><path d="M5 5l8 8M13 5l-8 8" stroke="#000308" stroke-width="2.200"/></svg>
    <span class="ime">한</span>
    <div class="clock"><span>오전 12:39</span><span>2019-02-22</span></div>
    <div class="note"><svg width="32" height="32" viewBox="0 0 32 32"><path d="M0 1h20v17H9l-5 4v-4H0z" fill="#fff"/><path d="M4 5.500h12M4 9.500h12M4 13.500h8" stroke="#000308" stroke-width="1.300"/><circle cx="20" cy="20" r="10" fill="#2b2b2b" stroke="#777"/></svg><b>2</b></div>
    <i class="desk"></i>
  </div>
</footer>
</body>
</html>
```
FILE: styles.css
```css
* { box-sizing: border-box; }
body { margin: 0; width: 1920px; height: 1080px; overflow: hidden; background: #212121; color: #d8d8d8; font: 14.700px/1.15 Roboto, "Noto Sans CJK KR", sans-serif; }
svg { display: block; flex: none; }
i, em { font-style: normal; }
.defs { position: absolute; }
.app { height: 1030px; display: flex; flex-direction: column; }
.sh { text-shadow: 1px 1px 1px #000, 1px 1px 0 #111; }

.titlebar { height: 32px; flex: none; display: flex; background: linear-gradient(#4e4e4e, #464646 25%, #2a2a2a 85%, #1e1e1e); border-bottom: 1px solid #000; }
.ue { margin: 3px 15px 0 0; }
.doctab { width: 264px; height: 30px; margin-top: 1px; position: relative; }
.doctab-shape { position: absolute; left: 0; top: 0; }
.doctab-row { position: relative; display: flex; align-items: center; height: 30px; padding-left: 21px; font-size: 16px; }
.docicon { width: 23px; height: 22px; background: #26375c; border-bottom: 2px solid #2e63d8; margin-right: 6px; display: flex; justify-content: center; }
.doctab-row .tx { margin-left: auto; margin-right: 26px; }
.hat { margin: 5px 15px 0 auto; }
.winbtns { display: flex; gap: 1px; margin-right: 3px; height: 20px; }
.winbtns span { display: flex; align-items: center; justify-content: center; border: 1px solid #8a8a8a; border-top: 0; background: linear-gradient(#555, #333); border-radius: 0 0 3px 3px; height: 20px; }
.w1 { width: 31px; } .w2 { width: 28px; } .w3 { width: 51px; }

.menubar { height: 24px; flex: none; display: flex; align-items: center; background: linear-gradient(#2a2a2a, #181818 60%, #1e1e1e); border-bottom: 1px solid #000; padding-top: 2px; }
.menubar > span { padding: 0 13px; color: #e4e4e4; }
.parent { margin-left: auto; padding-right: 11px; display: flex; align-items: center; gap: 9px; }
.pl { color: #777; text-shadow: 1px 1px 1px #000; }
.link { color: #e8e8e8; font-size: 16px; letter-spacing: .2px; border-bottom: 1px dotted #e8e8e8; line-height: 17px; }

.work { flex: 1; min-height: 0; display: flex; padding-top: 1px; }
.left { width: 287px; padding-left: 1px; display: flex; flex-direction: column; }
.center { width: 1143px; margin-left: 7px; display: flex; flex-direction: column; }
.right { width: 477px; margin-left: 6px; display: flex; flex-direction: column; }

.tab { width: 188px; height: 27px; flex: none; margin-left: 5px; background: #606060; border-radius: 3px 3px 0 0; display: flex; align-items: center; gap: 8px; padding: 0 13px 0 9px; }
.tab .tx { margin-left: auto; opacity: .8; }
.tab.t2 { margin-top: 8px; }
.panel { border: 3px solid #606060; background: #3e3e3e; border-radius: 2px; }
.comp { height: 261px; flex: none; display: flex; flex-direction: column; }
.bar { display: flex; align-items: center; background: #3e3e3e; }
.comp .bar { height: 38px; padding-left: 4px; border-bottom: 2px solid #2c2c2c; gap: 7px; }
.green { width: 104px; height: 30px; background: #4fa650; border: 1px solid #3e8a40; display: flex; align-items: center; justify-content: space-between; padding: 1px 8px 0 3px; color: #fff; font-size: 15.500px; }
.green.big { width: 166px; height: 30px; padding: 0 9px 0 8px; font-size: 19.300px; font-weight: 500; }
.search { height: 22px; background: #c9c9c9; border-radius: 3px; color: #8a8a8a; display: flex; align-items: center; justify-content: space-between; padding: 1px 1px 0 7px; }
.search svg { color: #111; }
.s1 { width: 100px; } .s2 { width: 115px; } .s3 { width: 376px; }
.tree { display: flex; flex-direction: column; font-size: 15.500px; letter-spacing: 0; color: #dcdcdc; padding: 2px 2px 0; }
.row { height: 25px; flex: none; display: flex; align-items: center; white-space: nowrap; }
.row.sel { background: #c9ae8a; color: #111; padding-left: 4px; gap: 14px; height: 26px; padding-bottom: 5px; margin-bottom: 6px; position: relative; letter-spacing: -.2px; }
.d0 .cap { margin: 0 6px 0 5px; }
.d0 { padding-left: 1px; }
.d1 { padding-left: 25px; gap: 3px; }
.d1 svg { width: 20px; }
.d2 { padding-left: 14px; }
.boom { margin: 0 3px; }
.d3 { padding-left: 38px; gap: 2px; margin-bottom: 4px; }
.d4 { border-top: 1px solid #5a5a5a; height: 34px; padding-left: 12px; gap: 2px; }
.bp { height: 648px; flex: none; display: flex; flex-direction: column; background: #606060; }
.bp .bar { height: 38px; flex: none; padding-left: 5px; gap: 2px; border-radius: 3px; }
.eye { margin-left: 5px; } .wt { margin-left: 2px; color: #d0d0d0; }
.listwrap { flex: 1; min-height: 0; display: flex; gap: 3px; padding-top: 6px; }
.list { width: 261px; overflow: hidden; }
.hd { height: 30px; background: #2e2e2e; border-radius: 4px 4px 0 0; display: flex; align-items: center; font-size: 16px; padding: 0 4px 0 1px; color: #e0e0e0; }
.hd b { margin-left: 2px; padding-top: 2px; font-weight: 500; text-shadow: 1px 2px 0 #000; }
.hd b.ind { margin-left: 11px; }
.hd em { margin-left: 6px; padding-top: 2px; color: #8e8e8e; font-size: 14.300px; }
.add { margin-left: auto; width: 25px; height: 23px; border-radius: 3px; background: #3c3c3c; display: flex; align-items: center; justify-content: center; color: #fff; }
.body { background: #3e3e3e; margin-bottom: 3px; overflow: hidden; }
.fns { height: 400px; margin-bottom: 2px; } .hd.m { margin-bottom: 3px; }
.gr { height: 25px; }
.fn { height: 25px; display: flex; align-items: center; padding-left: 12px; font-size: 15.500px; letter-spacing: .45px; color: #d6d6d6; }
.fn span { margin-left: auto; width: 213px; margin-right: 12px; padding-top: 1px; overflow: hidden; white-space: nowrap; line-height: 22px; }
.fi { margin-left: 1px; }
.fn .sh0 { margin: 0 4px 0 -10px; }
.at { height: 23px; } .at b { letter-spacing: .1px; }
.vars .fn span { width: auto; margin: 0 0 0 5px; padding-top: 0; }
.lid { width: 20px; height: 18px; background: #6a6a6a; border-radius: 3px; margin-left: auto; margin-right: 6px; display: flex; align-items: center; justify-content: center; }
.thumb { width: 14px; height: 369px; background: #fff; border: 1px solid #1e1e1e; border-radius: 2px; }

.toolbar { height: 78px; flex: none; background: #606060; padding: 2px 1px 3px; background-image: linear-gradient(135deg, #b8912a 0 7px, transparent 7px); }
.tools { width: 974px; height: 73px; background: #3e3e3e; border-radius: 4px; display: flex; align-items: flex-start; background-image: linear-gradient(135deg, #b8912a 0 6px, transparent 6px); }
.tool { height: 73px; display: flex; flex-direction: column; align-items: center; justify-content: space-between; padding: 3px 0 1px; color: #e2e2e2; white-space: nowrap; font-size: 14.700px; flex: none; }
.tl-a { width: 68px; } .tl-b { width: 66px; } .tl-c { width: 72px; } .tl-d { width: 66px; } .tl-e { width: 98px; } .tl-f { width: 100px; margin-left: 3px; } .tl-g { width: 92px; } .tl-h { width: 68px; }
.tool.on { background: #d9820b; border-radius: 3px; }
.ta { margin: 34px 0 0 10px; color: #c8c8c8; }
.sep { width: 2px; height: 71px; margin-top: 1px; background: #5c5c5c; border-left: 1px solid #2c2c2c; flex: none; }
.s-a { margin-left: 10px; } .s-b, .s-c { margin-left: 1px; } .s-d { margin-left: 5px; }
.tb { margin-left: 11px; }
.dbg { margin: 19px 0 0 12px; width: 256px; display: flex; flex-direction: column; align-items: center; gap: 4px; }
.combo { width: 256px; height: 27px; background: #dcdcdc; color: #111; display: flex; align-items: center; justify-content: space-between; padding: 2px 10px 0 8px; white-space: nowrap; font-size: 15px; letter-spacing: 0; }
.tabs { display: flex; gap: 3px; padding: 6px 0 0 5px; height: 32px; flex: none; }
.tabs .tab { margin-left: 0; height: 26px; width: 187px; padding-left: 7px; padding-top: 1px; gap: 9px; }
.tab.off { background: #454545; }
.tab.act { border-top: 1px solid #b8962a; padding-top: 0; }
.tab.act span { margin-left: -2px; }
.graph { height: 679px; flex: none; border: 3px solid #606060; border-left-width: 2px; position: relative; overflow: hidden; background: #262626; }
.world { position: absolute; left: -296px; top: -170px; width: 1434px; height: 843px; overflow: hidden; }
.layer { position: absolute; left: 0; top: 0; }
.vig { position: absolute; inset: 0; box-shadow: inset 0 0 50px 4px rgba(0,0,0,.5); }
.ghead { position: absolute; left: 0; top: 0; right: 0; height: 52px; background: rgba(5,5,5,.72); display: flex; align-items: center; padding: 0 7px 0 9px; font-size: 24px; color: #8e8e8e; }
.vl { width: 2px; height: 46px; background: #777; } .v1 { margin-left: 9px; } .v2 { margin-left: 18px; }
.bk { margin-left: 13px; } .fw { margin-left: 32px; } .gi { margin-left: 13px; }
.c1 { margin-left: 18px; letter-spacing: .2px; } .chev { margin: 0 12px 0 8px; } .c2 { font-size: 24.700px; margin-top: -3px; }
.zoom { margin-left: auto; color: #393939; font-weight: 700; margin-top: -4px; font-size: 25px; }

.node { position: absolute; background: rgba(12,14,12,.88); border: 1px solid #0a0a0a; border-radius: 6px; box-shadow: 0 2px 5px rgba(0,0,0,.6); font-size: 10.600px; color: #e2e2e2; }
.node b { font-size: 11px; font-weight: 700; color: #e6e6e6; white-space: nowrap; }
.nh { height: 20px; display: flex; align-items: center; border-radius: 5px 5px 0 0; border-top: 1px solid rgba(255,255,255,.35); padding-left: 8px; }
.red { background: linear-gradient(90deg, #8e1c1c, #801919 60%, #4b2020 90%, #3a2424); padding-left: 8px; }
.red b { margin-left: 3px; }
.blue { background: radial-gradient(ellipse 130px 40px at 15px 12px, #44779c, #38617f 50%, transparent), #26323a; }
.gray { background: radial-gradient(ellipse 100px 50px at 0 10px, #a8a8a8, #868686 50%, transparent 90%), #343434; }
.gray b { margin-left: 2px; }
.two { height: 31px; flex-direction: column; align-items: flex-start; justify-content: center; padding: 2px 0 0 12px; gap: 1px; }
.two em { font-style: italic; color: #87957a; font-size: 10.800px; white-space: nowrap; }
.nb { padding-top: 1px; }
.pr { height: 24px; display: flex; align-items: center; padding: 0 9px 0 8px; white-space: nowrap; }
.pr.p { height: 21px; }
.pr.q { height: 23px; }
.pr span { margin: 1px 4px 0; } .pr svg + span:not(.r) { margin-left: 3px; }
.r { margin-left: auto !important; }
.pg { color: #92ef38; } .po { color: #0a86c4; } .pk { color: #7d0404; }
.n-view { left: 289px; top: 274px; width: 122px; height: 98px; }
.n-view .ex0 { height: 27px; } .n-view .tg { height: 16px; padding-left: 14px; } .more { margin: 8px auto 0 49px; color: #bbb; }
.n-any { left: 318px; top: 450px; width: 143px; height: 132px; }
.n-once { left: 710px; top: 450px; width: 198px; height: 99px; }
.n-delay { left: 1182px; top: 450px; width: 188px; height: 73px; }
.fb { color: #7cc4f0; margin: 0 4px 0 1px; }
.n-inv { left: 506px; top: 787px; width: 144px; height: 80px; }
.n-inv .pr, .n-br .pr { opacity: .85; }
.n-br { left: 791px; top: 787px; width: 146px; height: 80px; }
.n-ui { left: 980px; top: 814px; width: 257px; height: 60px; }
.n-ui .nh { padding-left: 5px; gap: 4px; }
.pill { border-radius: 13px; background: linear-gradient(rgba(255,255,255,.25), rgba(255,255,255,.04) 40%, rgba(0,0,0,.25)), rgba(24,24,24,.85); border-top-color: #777; }
.n-ch { left: 317px; top: 396px; width: 112px; height: 27px; display: flex; align-items: center; white-space: nowrap; padding-left: 16px; gap: 4px; background: radial-gradient(ellipse 48px 26px at 50px 0, rgba(130,200,70,.75), transparent), linear-gradient(rgba(255,255,255,.25), rgba(255,255,255,.04) 45%, rgba(0,0,0,.25)), rgba(24,24,24,.85); }
.n-sub { left: 588px; top: 558px; width: 87px; height: 42px; display: grid; grid-template-columns: 54px 1fr; grid-template-rows: 20px 20px; }
.i1 { grid-area: 1 / 1; margin: 5px 0 0 8px; } .i2 { grid-area: 2 / 1; margin: 5px 0 0 8px; } .i3 { grid-area: 1 / 2 / 3 / 3; margin: 15px 0 0 9px; }
.minus { grid-area: 1 / 1 / 3 / 2; justify-self: end; margin: 21px 9px 0 0; width: 6px; height: 2px; background: #999; }
.n-set { left: 980px; top: 464px; width: 149px; height: 54px; border-radius: 10px; padding-top: 5px; background: radial-gradient(ellipse 70px 34px at 74px 0, rgba(130,200,70,.75), transparent), linear-gradient(rgba(255,255,255,.3), rgba(255,255,255,.04) 35%, rgba(0,0,0,.25)), rgba(24,24,24,.85); text-align: center; }
.n-set b { display: block; height: 2px; line-height: 14px; }
.n-set .pr { padding: 0 10px 0 9px; } .n-set .s { height: 20px; } .n-set .s svg + span { margin-left: 4px; }
.n-set2 { left: 1304px; top: 827px; width: 170px; height: 54px; border-radius: 10px; text-align: center; padding-top: 6px; background: radial-gradient(ellipse 80px 34px at 84px 0, rgba(40,130,170,.75), transparent), rgba(40,40,40,.9); }
.cb { width: 13px; height: 13px; border: 2px solid #bbb; border-radius: 3px; margin: 3px 0 0 2px; }
.num { border: 1px solid #ccc; height: 15px; width: 24px; margin: 2px 0 0 1px; display: flex; align-items: center; justify-content: center; }
.badge { position: absolute; }
.b1 { left: 396px; top: 263px; } .b2 { left: 445px; top: 440px; } .b3 { left: 1357px; top: 441px; } .b4 { left: 1221px; top: 803px; } .b5 { left: 470px; top: 681px; } .b6 { left: 296px; top: 315px; }
.bubble { position: absolute; left: 459px; top: 649px; width: 135px; height: 33px; border: 1px solid #eee; border-radius: 4px; background: linear-gradient(#b4b4b4, #d4d4d4); color: #444; font-size: 17px; display: flex; align-items: center; justify-content: center; }
.ctitle { position: absolute; left: 470px; top: 699px; font-size: 20px; letter-spacing: .1px; font-weight: 700; color: #ececec; text-shadow: 1px 2px 1px #333; }
.mark { position: absolute; left: 1046px; top: 731px; font-size: 81px; line-height: 108px; font-weight: 500; color: rgba(255,255,255,.18); white-space: nowrap; }

.tab.t3 { margin-top: 6px; margin-left: 5px; width: 187px; gap: 10px; }
.out { height: 149px; flex: none; padding: 4px 6px 0 4px; border-width: 2px; }
.log { height: 97px; background: #212121; border-radius: 3px; }
.clr { text-align: right; color: #7c7c7c; padding: 14px 7px 0; }

.right .tab { gap: 9px; padding-left: 7px; width: 187px; }
.det { flex: none; height: 944px; background: #606060; padding: 2px 3px 3px 2px; display: flex; flex-direction: column; }
.dbar { height: 33px; flex: none; display: flex; align-items: center; padding-left: 5px; padding-bottom: 3px; }
.gbtn { width: 33px; height: 28px; margin-left: 11px; background: linear-gradient(#e0e0e0, #aaa); border: 1px solid #333; border-radius: 3px; display: flex; align-items: center; justify-content: center; }
.dbody { flex: 1; min-height: 0; overflow: hidden; position: relative; }
.dh { height: 26px; background: #2e2e2e; border-radius: 4px 4px 0 0; display: flex; align-items: center; padding-left: 4px; gap: 5px; font-size: 16px; color: #e4e4e4; }
.dh b { text-shadow: 1px 2px 1px #000; font-weight: 700; padding-top: 1px; }
.g3 { margin-top: 3px; } .g3 b { font-weight: 500; } .g2 { margin-top: 2px; height: 27px; }
.props { background: #3e3e3e; }
.p1 { height: 585px; border-radius: 0 0 3px 3px; } .p2 { height: 94px; }
.prop { height: 30px; display: flex; font-size: 13.500px; color: #d2d2d2; }
.h35 { height: 35px; } .h31 { height: 31px; } .h29 { height: 29px; } .h14 { height: 14px; }
.ref { height: 98px; }
.prop label { width: 159px; padding: 1px 0 0 20px; display: flex; align-items: center; overflow: hidden; white-space: nowrap; letter-spacing: .65px; border-right: 1px solid #1c1c1c; flex: none; }
.ex { margin: -4px 7px 0 -14px; }
.v { display: flex; align-items: center; padding-left: 4px; }
.arr { letter-spacing: .62px; width: 146px; padding-top: 1px; } .pl1 { color: #e4e4e4; margin: -4px 16px 0 -5px; }
.trash { margin-top: -3px; }
.in { width: 131px; height: 21px; background: #d8d8d8; border-radius: 3px; color: #111; display: flex; align-items: center; justify-content: space-between; padding: 0 7px 0 5px; font-size: 13.800px; letter-spacing: .2px; }
.ck { width: 18px; height: 18px; background: #adadad; border: 1px solid #999; border-radius: 3px; margin-left: 1px; display: flex; align-items: center; justify-content: center; }
.ck.yes { background: #dcdcdc; }
.th { width: 80px; height: 81px; margin-left: 6px; background: radial-gradient(circle at 50% 80%, #616161, #505050); border-bottom: 4px solid #fff; box-shadow: 0 1px 2px 1px #222; display: flex; align-items: center; justify-content: center; font-size: 12px; text-shadow: 1px 1px 0 #222; padding: 5px 2px 0 0; }
.rc { margin: -3px 0 0 9px; }
.sel2 { width: 186px; height: 23px; background: #5a5a5a; border-radius: 3px; display: flex; align-items: center; justify-content: space-between; padding: 1px 5px 0 3px; color: #eee; font-size: 14px; }
.ri { display: flex; gap: 15px; align-items: center; padding: 7px 0 0 7px; color: #dcdcdc; }
.ri svg + svg { color: #a8a8a8; }
.moreb { height: 16px; background: #484848; border-radius: 0 0 3px 3px; display: flex; justify-content: center; padding: 2px 22px 0 0; }
.p3 { height: 160px; }
.dth { position: absolute; right: 3px; top: 1px; height: 307px; }

.task { height: 50px; background: #000308; display: flex; font-family: "Open Sans", "Noto Sans CJK KR", sans-serif; color: #fff; }
.start { width: 60px; display: flex; align-items: center; justify-content: center; }
.ws { width: 430px; background: #333; color: #949494; font-size: 18px; display: flex; align-items: center; padding: 2px 0 0 10px; letter-spacing: .15px; }
.ti { display: flex; align-items: center; justify-content: center; }
.w60 { width: 60px; } .w64 { width: 65px; }
.ti.ueb { width: 61px; background: linear-gradient(90deg, #2f3338 56px, #15181c 56px, #15181c 57px, #262a2f 57px); border-bottom: 3px solid #76b4e8; padding: 3px 3px 0 0; }
.tray { margin-left: auto; display: flex; align-items: center; width: 374px; }
.t-b { margin-left: 12px; } .t-c { margin-left: 10px; } .t-d { margin-left: 10px; } .t-e { margin-left: 12px; } .t-f { margin-left: 11px; }
.ime { width: 18px; height: 18px; margin-left: 18px; background: #fff; color: #000; font-size: 15px; line-height: 16px; text-align: center; }
.clock { width: 76px; margin-left: 22px; display: flex; flex-direction: column; align-items: center; font-size: 14.700px; line-height: 23px; white-space: nowrap; letter-spacing: -.1px; }
.note { margin: 8px 0 0 22px; position: relative; }
.note b { position: absolute; left: 16px; top: 11px; font-size: 13px; }
.desk { width: 1px; height: 50px; background: #555; margin-left: 12px; }
```
